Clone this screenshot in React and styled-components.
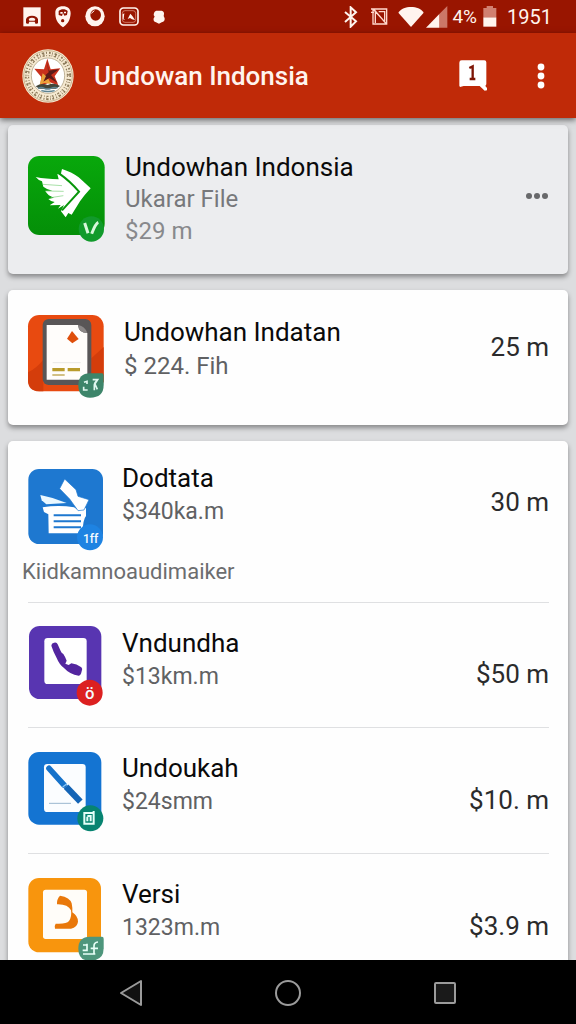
import React from 'react';
import styled, { createGlobalStyle } from 'styled-components';

const App = () => (
  <Screen>
    <GlobalStyle />

    {/* System status bar */}
    <StatusBar>
      <StatusLeft>
        <svg width='18' height='20' viewBox='0 0 54 60'>
          <path fill='#fff4ee' d='M1 1h52v57H1z' />
          <path fill='#8f1300' d='M9 49V37q3-11 18-11t18 11v12l-7 2-3-7H19l-3 7z' />
          <path fill='#fff4ee' d='M17 36q10-8 20 0l-2 5H19z' />
        </svg>
        <svg width='16' height='22' viewBox='0 0 48 66'>
          <path fill='#fff4ee' d='M24 1C9 1 0 8 1 22c0 16 5 30 23 42 18-12 22-26 23-42C47 8 38 1 24 1z' />
          <path fill='#8f1300' d='M11 15c7-7 20-7 27 0l-2 12-8 2-4-8-3 9-10-3z' />
          <path fill='#fff4ee' d='M16 18h7v5h-7zm11-1h6v5h-6z' />
          <circle cx='23' cy='44' r='5' fill='#8f1300' />
        </svg>
        <svg width='20' height='21' viewBox='0 0 60 63'>
          <ellipse cx='30' cy='31' rx='29' ry='30' fill='#fff4ee' />
          <ellipse cx='32' cy='27' rx='16' ry='17' fill='#971500' />
          <path d='M19 22l9-8' stroke='#fff4ee' strokeWidth='3' />
        </svg>
        <svg width='20' height='19' viewBox='0 0 60 57'>
          <rect x='3' y='3' width='54' height='51' rx='10' fill='none' stroke='#fff4ee' strokeWidth='5' />
          <rect x='10' y='11' width='40' height='35' rx='8' fill='none' stroke='#e8a593' strokeWidth='2' />
          <path fill='#fff4ee' d='M26 36l8-16 6 7 8 12-9-2-6-4zM11 22l5-3-2 16 5 4-8-2z' />
        </svg>
        <svg width='12' height='14' viewBox='0 0 36 42'>
          <path fill='#fff4ee' d='M10 2h16q8 2 7 10-3 6 2 13 1 10-9 12l-8 4-9-4Q0 35 2 25l3-5Q0 15 3 9 5 3 10 2z' />
        </svg>
      </StatusLeft>

      <StatusRight>
        <svg width='14' height='22' viewBox='0 0 42 66'>
          <path d='M3 18l33 28-16 16V4l16 15L3 48' fill='none' stroke='#fff4ee' strokeWidth='6' />
        </svg>
        <NfcIcon width='18' height='19' viewBox='0 0 54 57'>
          <path d='M3 6h47v45H9V6M3 16h9M16 48V12l28 33V14H26M9 6l40 44' fill='none' stroke='#ffd9cd' strokeWidth='4' />
        </NfcIcon>
        <svg width='26' height='20' viewBox='0 0 78 60'>
          <path fill='#fff4ee' d='M39 60L1 17C10 5 23 0 39 0s30 5 38 17z' />
        </svg>
        <SignalIcon width='22' height='22' viewBox='0 0 66 66'>
          <path fill='#ffd9cd' fillOpacity='.5' d='M64 0v65H40V24z' />
          <path fill='#fff4ee' d='M40 24v41H0z' />
        </SignalIcon>
        <Percent>4%</Percent>
        <BatteryIcon width='14' height='21' viewBox='0 0 42 63'>
          <path fill='#ffd9cd' fillOpacity='.55' d='M11 0h19v6h10v28H1V6h10z' />
          <path fill='#fff4ee' d='M1 34h39v28H1z' />
        </BatteryIcon>
        <Clock>1951</Clock>
      </StatusRight>
    </StatusBar>

    <AppBar>
      <Seal />
      <AppTitle>Undowan Indonsia</AppTitle>
      <MessageButton aria-label='Messages'>
        <svg width='28' height='31' viewBox='0 0 84 93'>
          <path fill='#fff' d='M8 1h68q6 0 6 6v66l-3 5 6 7-1 6-7 1-15-14H14l-11 3-2-4V8q0-7 7-7z' />
          <path d='M31 24l10-5v36M32 57h17' fill='none' stroke='#7d1505' strokeWidth='7' />
        </svg>
      </MessageButton>
      <MoreButton aria-label='More options'>
        <svg width='8' height='26' viewBox='0 0 8 26'>
          <circle cx='4' cy='4' r='3.4' fill='#fff' />
          <circle cx='4' cy='13' r='3.4' fill='#fff' />
          <circle cx='4' cy='22' r='3.4' fill='#fff' />
        </svg>
      </MoreButton>
    </AppBar>

    <Content>
      <Card $muted>
        <Row $top={26} $bottom={27} $center>
          <WingIcon />
          <Info $line={32} $gap={20}>
            <Title>Undowhan Indonsia</Title>
            <Subtitle $tone='#77787b'>Ukarar File</Subtitle>
            <Subtitle $tone='#88898c'>$29 m</Subtitle>
          </Info>
          <DotsButton aria-label='Item options'>
            <svg width='24' height='8' viewBox='0 0 24 8'>
              <circle cx='4' cy='4' r='3' fill='#68696b' />
              <circle cx='12' cy='4' r='3' fill='#68696b' />
              <circle cx='20' cy='4' r='3' fill='#68696b' />
            </svg>
          </DotsButton>
        </Row>
      </Card>

      <Card>
        <Row $top={25} $bottom={27}>
          <TabletIcon />
          <Info $line={34} $gap={20}>
            <Title>Undowhan Indatan</Title>
            <Subtitle>$ 224. Fih</Subtitle>
          </Info>
          <Price $drop={16}>25 m</Price>
        </Row>
      </Card>

      <Card>
        <Row $top={21} $bottom={5}>
          <LeadIcon>
            <BoxIcon />
          </LeadIcon>
          <Info $line={33}>
            <Title>Dodtata</Title>
            <Subtitle $small>$340ka.m</Subtitle>
          </Info>
          <Price $drop={24}>30 m</Price>
        </Row>
        <Note>Kiidkamnoaudimaiker</Note>
        <Divider />
        <Row $top={23} $bottom={21}>
          <PhoneIcon />
          <Info $line={34}>
            <Title>Vndundha</Title>
            <Subtitle $small>$13km.m</Subtitle>
          </Info>
          <Price $drop={32}>$50 m</Price>
        </Row>
        <Divider />
        <Row $top={24} $bottom={21}>
          <PenIcon />
          <Info $line={33}>
            <Title>Undoukah</Title>
            <Subtitle $small>$24smm</Subtitle>
          </Info>
          <Price $drop={32}>$10. m</Price>
        </Row>
        <Divider />
        <Row $top={24} $bottom={21}>
          <HookIcon />
          <Info $line={33}>
            <Title>Versi</Title>
            <Subtitle $small>1323m.m</Subtitle>
          </Info>
          <Price $drop={32}>$3.9 m</Price>
        </Row>
      </Card>
    </Content>

    {/* System navigation */}
    <NavBar>
      <NavButton aria-label='Back'>
        <svg width='24' height='28' viewBox='0 0 24 28'>
          <path d='M22 2v24L2 14z' fill='#111' stroke='#9b9b9b' strokeWidth='2' strokeLinejoin='round' />
        </svg>
      </NavButton>
      <NavButton aria-label='Home'>
        <svg width='28' height='28' viewBox='0 0 28 28'>
          <circle cx='14' cy='14' r='12' fill='none' stroke='#9b9b9b' strokeWidth='2' />
        </svg>
      </NavButton>
      <NavButton aria-label='Recent apps'>
        <svg width='24' height='24' viewBox='0 0 24 24'>
          <rect x='2' y='2' width='20' height='20' rx='1' fill='#1a1a1a' stroke='#9b9b9b' strokeWidth='2' />
        </svg>
      </NavButton>
    </NavBar>
  </Screen>
);

// Round seal next to the app name
const Seal = () => (
  <svg width='52' height='54' viewBox='0 0 156 162'>
    <ellipse cx='78' cy='81' rx='77' ry='80' fill='#f6ead2' />
    <ellipse cx='78' cy='81' rx='73' ry='76' fill='none' stroke='#b29468' strokeWidth='2' />
    <ellipse cx='78' cy='81' rx='63' ry='66' fill='none' stroke='#8c7a5a' strokeWidth='13' strokeDasharray='3 6 5 4 2 5 7 5' />
    <ellipse cx='78' cy='81' rx='62' ry='65' fill='none' stroke='#f3e6cd' strokeWidth='4' strokeDasharray='7 5' />
    <ellipse cx='78' cy='80' rx='50' ry='53' fill='#fff' stroke='#a2926f' strokeWidth='2' />
    <path fill='#c9301c' d='M76 29l10 32 29-3-17 24 11 27-26-9-29 13 4-29-21-25 29 2z' />
    <path fill='#5b1a18' d='M76 29l2 36 33-4-24 17 20 24-25-15-18 12 4-19 12-10z' />
    <path fill='#e9a23a' d='M62 73l10 8-8 17 15-9 8 16-20-3-14 5z' />
    <path fill='#42463a' d='M41 112q18-12 36-4 19-9 37 3l-12 8H52z' />
    <path d='M48 118q10-5 19 0t20 0 20-1M58 125q20 5 40 0' fill='none' stroke='#5c8290' strokeWidth='4' />
  </svg>
);

const WingIcon = () => (
  <TileSvg width='77' height='86' viewBox='84 108 231 258'>
    <defs>
      <linearGradient id='green' x1='0' y1='0' x2='0' y2='1'>
        <stop offset='0' stopColor='#08a80b' />
        <stop offset='1' stopColor='#048f08' />
      </linearGradient>
    </defs>
    <rect x='84' y='108' width='230' height='237' rx='34' fill='url(#green)' />
    <path
      fill='#fff'
      d='M107 171q30 6 69 7l-4-16 10 2 4-17q29 9 50 25l36 33q-17 18-32 39l-25 40-10-5-8 13-14-18 9-19-18 11 8-11-33 1 15-10q-12-2-19-9l17-4q-18-5-26-20l21-1q-16-3-27-12l-4-16q-12-4-19-13z'
    />
    <path d='M177 160q34 24 60 55l-51 56' fill='none' stroke='#07960a' strokeWidth='6' />
    <path d='M128 193l58 4M136 213l55 1M152 233l38-6' stroke='#7bd07c' strokeWidth='2' />
    <circle cx='274' cy='327' r='38' fill='#119a2b' />
    <path d='M254 309l10 31M295 307q-8 3-20 34' fill='none' stroke='#d8f7dc' strokeWidth='9' />
  </TileSvg>
);

const TabletIcon = () => (
  <TileSvg width='76' height='83' viewBox='84 104 228 249'>
    <rect x='84' y='104' width='227' height='229' rx='34' fill='#e84a10' />
    <path fill='#d43d0b' d='M84 276q25-12 46-38v95h-12q-34 0-34-34zM274 234l37-34v105l-37 20z' />
    <rect x='128' y='116' width='146' height='198' rx='18' fill='#595657' />
    <path fill='#fffdfb' d='M140 134h94q2 24 28 24v140H140z' />
    <path fill='#8c8888' d='M234 134q22 5 28 24-25 0-28-24z' />
    <path fill='#df4e0b' d='M216 152l20 24-19 13-16-14z' />
    <path d='M158 247h84' stroke='#ddd' strokeWidth='2' />
    <path d='M157 268h37M203 268h37' stroke='#b99b2c' strokeWidth='10' />
    <path d='M157 284h37' stroke='#c9b46c' strokeWidth='5' />
    <path fill='#3d856a' d='M270 279h36q5 0 5 6v29q0 38-41 38-35 0-35-37 0-36 35-36z' />
    <path d='M252 306l9-3v8M251 319v10h12M278 298h15l-10 15v17M292 298l-8 11 8 18' fill='none' stroke='#dff7ef' strokeWidth='5' />
  </TileSvg>
);

const BoxIcon = () => (
  <TileSvg width='76' height='82' viewBox='84 87 228 246'>
    <rect x='85' y='87' width='224' height='225' rx='32' fill='#1e78d0' />
    <path fill='#fff' d='M128 202q48-8 94 0l12 8 24-6v24q-10 11-10 52H146l-1-57-13-7z' />
    <path fill='#eaf8ff' d='M121 165q42 8 79 24l-61 4-14-12z' />
    <path fill='#fff' stroke='#1e78d0' strokeWidth='2' d='M194 117l34 32 6 20 33 10-15 31-18 2-25-35-30-31z' />
    <path d='M161 226h82M161 244h82M161 262h82' stroke='#1e78d0' strokeWidth='6' />
    <circle cx='270' cy='292' r='39' fill='#1e83e2' />
    <BadgeText x='272' y='308'>1ff</BadgeText>
  </TileSvg>
);

const PhoneIcon = () => (
  <TileSvg width='76' height='80' viewBox='84 78 228 240'>
    <rect x='87' y='78' width='217' height='219' rx='32' fill='#5835b1' />
    <rect x='133' y='114' width='127' height='138' rx='10' fill='#fff' />
    <path
      fill='#53259f'
      d='M154 137q0-7 8-9 8-3 11 5l9 20q2 6 8 9 6 9 10 20l-4 9 10 4 8-5q16 2 30 12 5 5 1 12-3 14-9 13-27-4-44-23-14-10-22-30-9-16-16-37z'
    />
    <circle cx='269' cy='278' r='39' fill='#dc2020' />
    <BadgeText x='269' y='298' $big>ö</BadgeText>
  </TileSvg>
);

const PenIcon = () => (
  <TileSvg width='76' height='80' viewBox='84 67 228 240'>
    <rect x='85' y='67' width='219' height='218' rx='32' fill='#1474d2' />
    <rect x='132' y='103' width='125' height='144' rx='10' fill='#fbfdff' />
    <path d='M147 116l45 50' stroke='#1672ca' strokeWidth='17' strokeLinecap='round' />
    <path d='M198 171l43 45' stroke='#1464b6' strokeWidth='19' />
    <path d='M188 172l13-10' stroke='#8ec5f3' strokeWidth='4' />
    <path d='M147 221h66' stroke='#9ab7cf' strokeWidth='3' />
    <circle cx='271' cy='266' r='39' fill='#078471' />
    <path d='M253 250h28v32h-28zM281 244v10M262 261v14M262 259h10v16' fill='none' stroke='#e4fff8' strokeWidth='6' />
  </TileSvg>
);

const HookIcon = () => (
  <TileSvg width='76' height='83' viewBox='84 85 228 249'>
    <rect x='85' y='85' width='218' height='223' rx='32' fill='#f8950d' />
    <rect x='129' y='120' width='132' height='148' rx='8' fill='#fffdf9' />
    <path fill='#e9780a' d='M180 138q30 5 35 23 3 14 2 27 17 11 17 28-2 17-21 21h-48q-3-8 2-15 32 2 40-8 9-13 6-32-9-19-42-18-1-16 9-26z' />
    <path fill='#4e967c' d='M270 261h36q5 0 5 6v29q0 37-41 37-35 0-35-36t35-36z' />
    <path d='M249 286h12v16h-13M261 282v20M294 277q-12 1-12 12v23M272 296h22M249 313h37' fill='none' stroke='#e8fff7' strokeWidth='5' />
  </TileSvg>
);

// Styled components

const GlobalStyle = createGlobalStyle`
  * {
    box-sizing: border-box;
  }

  body {
    margin: 0;
    background-color: #000;
    font-family: Roboto, 'Noto Sans', sans-serif;
  }

  button {
    display: flex;
    align-items: center;
    justify-content: center;
    padding: 0;
    border: none;
    background: none;
    cursor: pointer;
  }

  svg {
    display: block;
    flex-shrink: 0;
  }
`;

const Screen = styled.div`
  display: flex;
  flex-direction: column;
  height: 100vh;
  overflow: hidden;
`;

const StatusBar = styled.div`
  display: flex;
  justify-content: space-between;
  align-items: center;
  flex-shrink: 0;
  height: 33px;
  padding: 0 24px 0 23px;
  color: #fff4ee;
  background-color: #991500;
`;

const StatusLeft = styled.div`
  display: flex;
  align-items: center;
  gap: 14px;
`;

const StatusRight = styled.div`
  display: flex;
  align-items: center;
`;

const NfcIcon = styled.svg`
  margin: 0 10px 0 12px;
`;

const SignalIcon = styled.svg`
  margin: 0 4px 0 2px;
`;

const BatteryIcon = styled.svg`
  margin: 0 10px 0 6px;
`;

const Percent = styled.span`
  font-size: 19px;
`;

const Clock = styled.span`
  font-size: 20px;
`;

const AppBar = styled.header`
  position: relative;
  z-index: 1;
  display: flex;
  align-items: center;
  flex-shrink: 0;
  height: 85px;
  padding: 0 22px;
  background-color: #c02a08;
  box-shadow: 0 2px 6px rgba(0, 0, 0, 0.55);
`;

const AppTitle = styled.h1`
  flex: 1;
  margin: 0 0 0 20px;
  font-size: 26px;
  font-weight: 500;
  color: #fff4ee;
`;

const MessageButton = styled.button`
  margin-right: 50px;
`;

const MoreButton = styled.button`
  width: 8px;
  margin-right: 9px;
`;

const Content = styled.main`
  display: flex;
  flex-direction: column;
  flex: 1;
  gap: 16px;
  min-height: 0;
  padding: 7px 8px 0;
  overflow: hidden;
  background-color: #dcdddf;
`;

const Card = styled.section`
  flex-shrink: 0;
  border-radius: 5px;
  background-color: ${({ $muted }) => ($muted ? '#ecedef' : '#fefefe')};
  box-shadow: 0 3px 5px rgba(0, 0, 0, 0.38);
`;

const Row = styled.div`
  display: flex;
  align-items: ${({ $center }) => ($center ? 'center' : 'flex-start')};
  padding: ${({ $top, $bottom }) => `${$top}px 19px ${$bottom}px 20px`};
`;

const LeadIcon = styled.div`
  padding-top: 7px;
`;

const TileSvg = styled.svg`
  overflow: visible;
`;

const BadgeText = styled.text`
  font-size: ${({ $big }) => ($big ? '50px' : '36px')};
  font-weight: 500;
  fill: #f4fbff;
  text-anchor: middle;
`;

const Info = styled.div`
  flex: 1;
  min-width: 0;
  margin-left: ${({ $gap }) => $gap || 18}px;
  line-height: ${({ $line }) => $line}px;
`;

const Title = styled.h2`
  margin: 0;
  font-size: 26px;
  font-weight: 400;
  color: #0a0a0a;
`;

const Subtitle = styled.p`
  margin: 0;
  font-size: ${({ $small }) => ($small ? '23px' : '24px')};
  color: ${({ $tone }) => $tone || '#606163'};
`;

const Price = styled.span`
  padding-top: ${({ $drop }) => $drop}px;
  font-size: 26px;
  line-height: 32px;
  color: #2b2b2c;
`;

const Note = styled.p`
  margin: 0;
  padding: 0 14px 14px;
  font-size: 22px;
  line-height: 32px;
  color: #6c6d6f;
`;

const Divider = styled.hr`
  height: 1px;
  margin: 0 19px 0 20px;
  border: none;
  background-color: #dfe0e2;
`;

const DotsButton = styled.button`
  height: 30px;

  svg {
    margin-bottom: 6px;
  }
`;

const NavBar = styled.nav`
  position: relative;
  z-index: 1;
  display: flex;
  justify-content: space-around;
  align-items: center;
  flex-shrink: 0;
  height: 64px;
  padding: 2px 53px 0;
  background-color: #000;
`;

const NavButton = styled.button`
  width: 48px;
  height: 60px;
`;

export default App;
